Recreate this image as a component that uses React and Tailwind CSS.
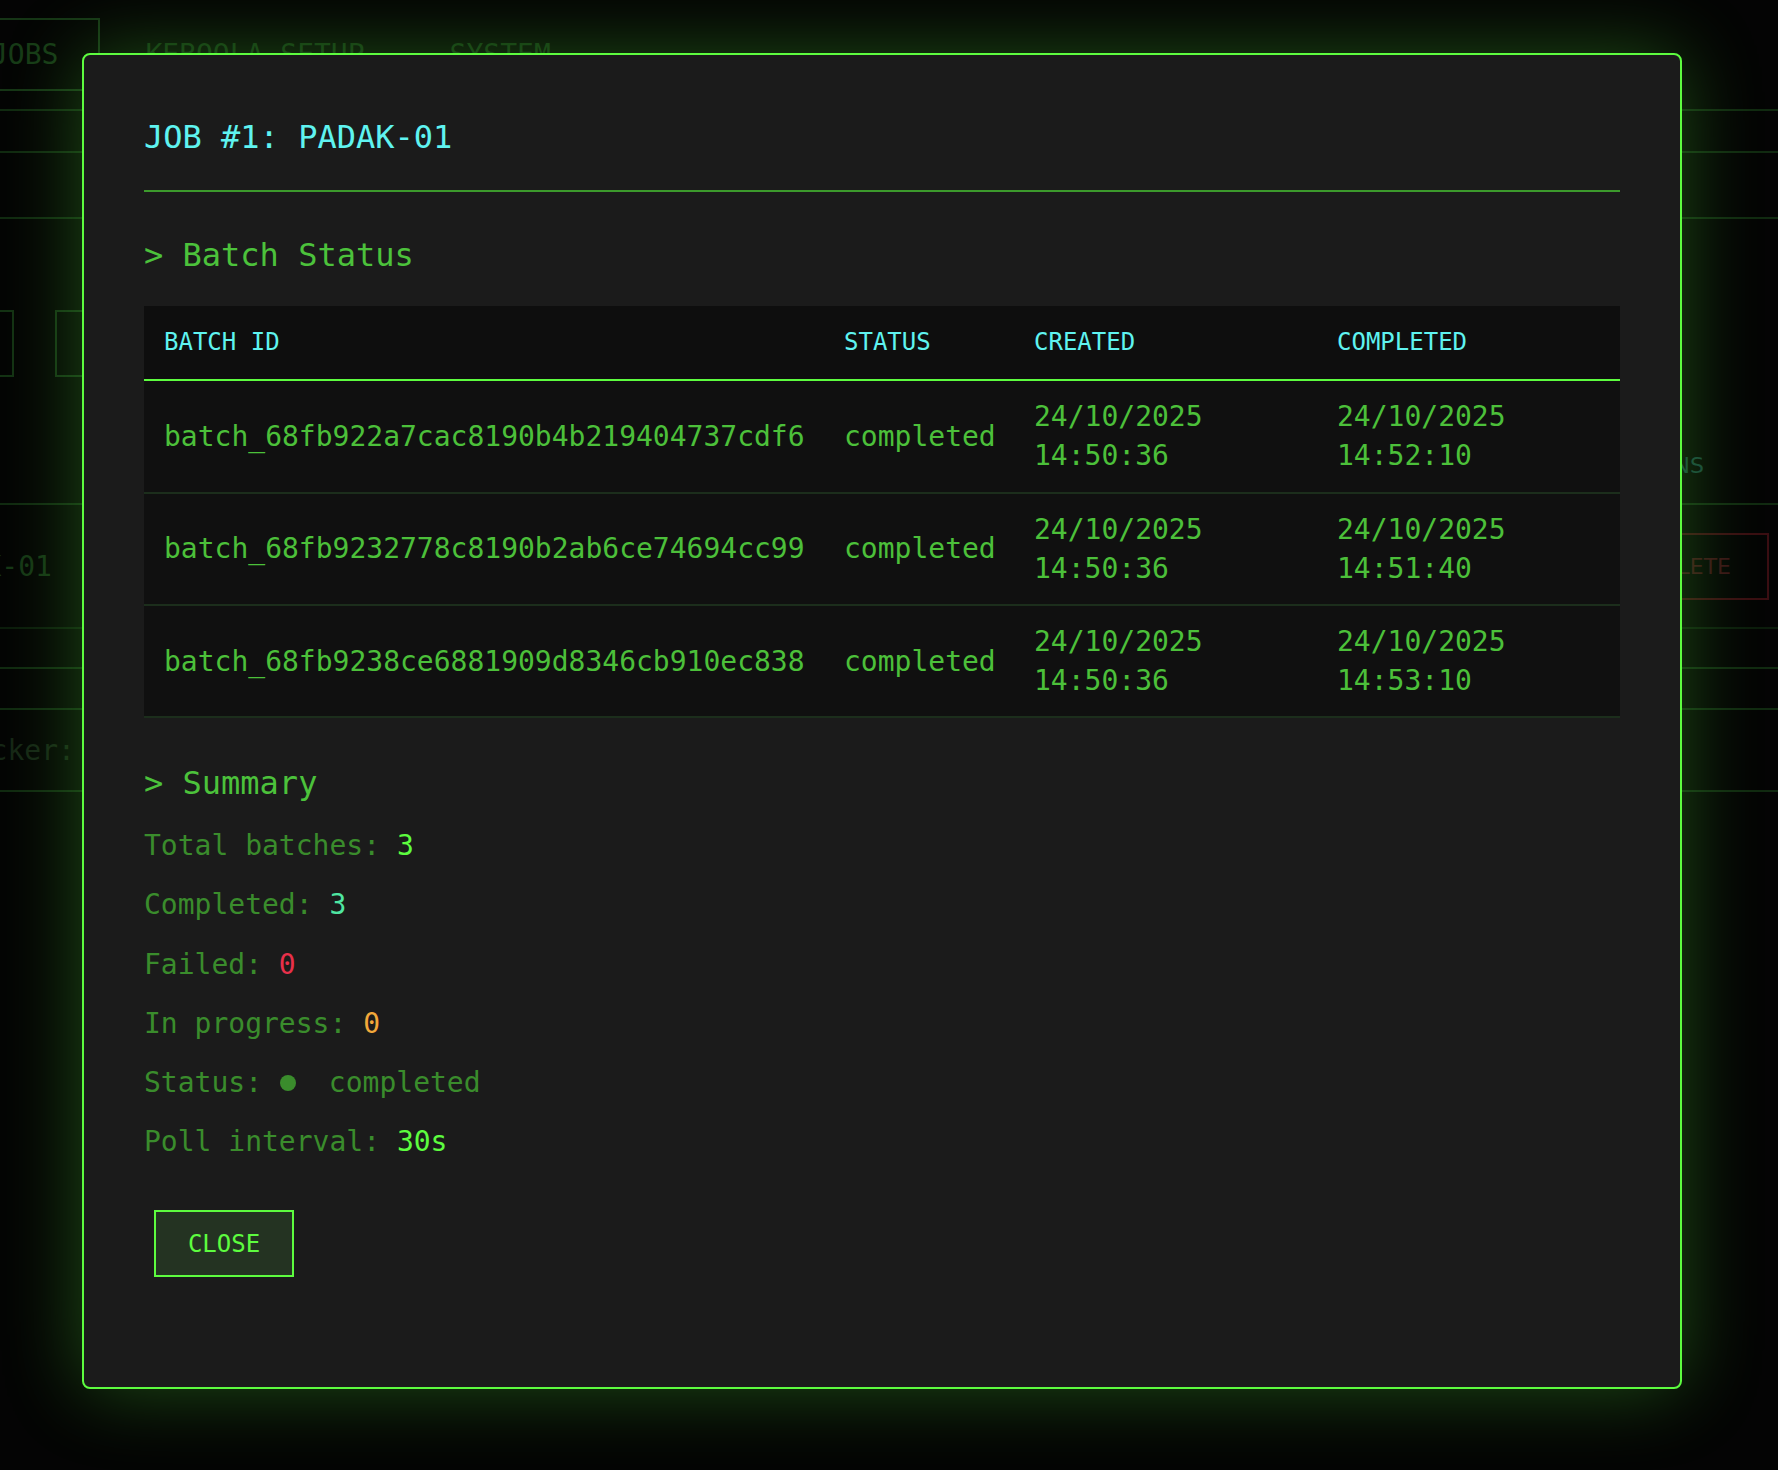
import React from "react";

const batches = [
  {
    id: "batch_68fb922a7cac8190b4b219404737cdf6",
    status: "completed",
    created: ["24/10/2025", "14:50:36"],
    completed: ["24/10/2025", "14:52:10"],
  },
  {
    id: "batch_68fb9232778c8190b2ab6ce74694cc99",
    status: "completed",
    created: ["24/10/2025", "14:50:36"],
    completed: ["24/10/2025", "14:51:40"],
  },
  {
    id: "batch_68fb9238ce6881909d8346cb910ec838",
    status: "completed",
    created: ["24/10/2025", "14:50:36"],
    completed: ["24/10/2025", "14:53:10"],
  },
];

function BackgroundPage() {
  return (
    <div className="flex flex-col text-[28px] leading-[39px]">
      {/* Tabs */}
      <div className="ml-[-51px] mt-[18px] flex h-[73px] gap-[5px]">
        <div className="flex items-center border-2 border-[#163516] px-[40px] text-[#173a17]">JOBS</div>
        <div className="flex items-center px-[40px] text-[#123012]">KEBOOLA SETUP</div>
        <div className="flex items-center px-[40px] text-[#123012]">SYSTEM</div>
      </div>

      <div className="h-[20px] border-b-2 border-[#112a11]" />
      <div className="h-[42px] border-b-2 border-[#112a11]" />
      <div className="h-[66px] border-b-2 border-[#112a11]" />

      {/* Filters + table header */}
      <div className="flex h-[286px] justify-between border-b-2 border-[#112a11]">
        <div className="ml-[-100px] mt-[91px] flex h-[67px] gap-[41px]">
          <div className="w-[114px] border-2 border-[#143214]" />
          <div className="w-[200px] border-2 border-[#143214]" />
        </div>
        <div className="mb-[22px] self-end pr-[74px] font-['DejaVu_Sans',sans-serif] text-[22px] leading-[30px] text-[#17403a]">
          ACTIONS
        </div>
      </div>

      {/* Job row */}
      <div className="flex h-[124px] items-center justify-between border-b-2 border-[#0c1c0c]">
        <div className="ml-[-83px] text-[#163616]">PADAK-01</div>
        <div className="mr-[9px] flex h-[67px] items-center border-2 border-[#3a0e12] px-[36px] font-['DejaVu_Sans',sans-serif] text-[22px] text-[#3a1216]">
          DELETE
        </div>
      </div>

      <div className="h-[40px] border-b-2 border-[#112a11]" />
      <div className="h-[41px] border-b-2 border-[#112a11]" />
      <div className="flex h-[82px] items-center border-b-2 border-[#112a11]">
        <div className="ml-[-60px] text-[#162616]">Tracker:</div>
      </div>
    </div>
  );
}

function BatchTable() {
  return (
    <table className="w-full table-fixed border-collapse">
      <colgroup>
        <col className="w-[680px]" />
        <col className="w-[190px]" />
        <col className="w-[303px]" />
        <col className="w-[303px]" />
      </colgroup>
      <thead className="bg-[#0e0e0e]">
        <tr className="border-b-2 border-[#5dfc3f]">
          <th className="px-[20px] py-[20px] text-left text-[24px] font-normal leading-[33.6px] text-[#5ff3f0]">BATCH ID</th>
          <th className="px-[20px] py-[20px] text-left text-[24px] font-normal leading-[33.6px] text-[#5ff3f0]">STATUS</th>
          <th className="px-[20px] py-[20px] text-left text-[24px] font-normal leading-[33.6px] text-[#5ff3f0]">CREATED</th>
          <th className="px-[20px] py-[20px] text-left text-[24px] font-normal leading-[33.6px] text-[#5ff3f0]">COMPLETED</th>
        </tr>
      </thead>
      <tbody>
        {batches.map((b) => (
          <tr key={b.id} className="border-b-2 border-[#1c2e1c] bg-[#101010] text-[28px] leading-[39.2px] text-[#4cc03a]">
            <td className="whitespace-nowrap px-[20px] py-[16px]">{b.id}</td>
            <td className="whitespace-nowrap px-[20px] py-[16px]">{b.status}</td>
            <td className="px-[20px] py-[16px]">
              {b.created[0]}
              <br />
              {b.created[1]}
            </td>
            <td className="px-[20px] py-[16px]">
              {b.completed[0]}
              <br />
              {b.completed[1]}
            </td>
          </tr>
        ))}
      </tbody>
    </table>
  );
}

function JobModal() {
  return (
    <div className="flex h-[1336px] w-[1600px] flex-col rounded-[8px] border-2 border-[#5dfc3f] bg-[#1b1b1b] p-[60px] shadow-[0_0_80px_rgba(93,252,63,0.3)]">
      <h2 className="border-b-2 border-[#3c9a2c] pb-[30px] text-[32px] leading-[44.8px] text-[#5ff3f0]">
        JOB #1: PADAK-01
      </h2>

      <h3 className="mb-[28px] mt-[41px] text-[32px] leading-[44.8px] text-[#4cc23b]">&gt; Batch Status</h3>
      <BatchTable />

      <h3 className="mt-[43px] text-[32px] leading-[44.8px] text-[#4cc23b]">&gt; Summary</h3>
      <div className="mt-[20px] flex flex-col gap-[20px] text-[28px] leading-[39.2px] text-[#3a8c2c]">
        <p>
          Total batches: <span className="text-[#5dfc3f]">3</span>
        </p>
        <p>
          Completed: <span className="text-[#4fe6a2]">3</span>
        </p>
        <p>
          Failed: <span className="text-[#e8304a]">0</span>
        </p>
        <p>
          In progress: <span className="text-[#f2a83a]">0</span>
        </p>
        <p className="flex items-center">
          <span className="whitespace-pre">Status: </span>
          <span className="ml-[1px] mr-[33px] inline-block h-[16px] w-[16px] rounded-full bg-[#3a8c2c]" />
          <span>completed</span>
        </p>
        <p>
          Poll interval: <span className="text-[#5dfc3f]">30s</span>
        </p>
      </div>

      <button className="ml-[10px] mt-[49px] flex h-[67px] w-[140px] items-center justify-center border-2 border-[#5dfc3f] bg-[#243322] text-[24px] text-[#5dfc3f]">
        CLOSE
      </button>
    </div>
  );
}

export default function App() {
  return (
    <div className="relative h-[1470px] w-full overflow-hidden bg-[#040404] font-['DejaVu_Sans_Mono',monospace]">
      <BackgroundPage />

      {/* Modal overlay */}
      <div className="absolute inset-0 flex justify-center pr-[14px] pt-[53px]">
        <JobModal />
      </div>
    </div>
  );
}
